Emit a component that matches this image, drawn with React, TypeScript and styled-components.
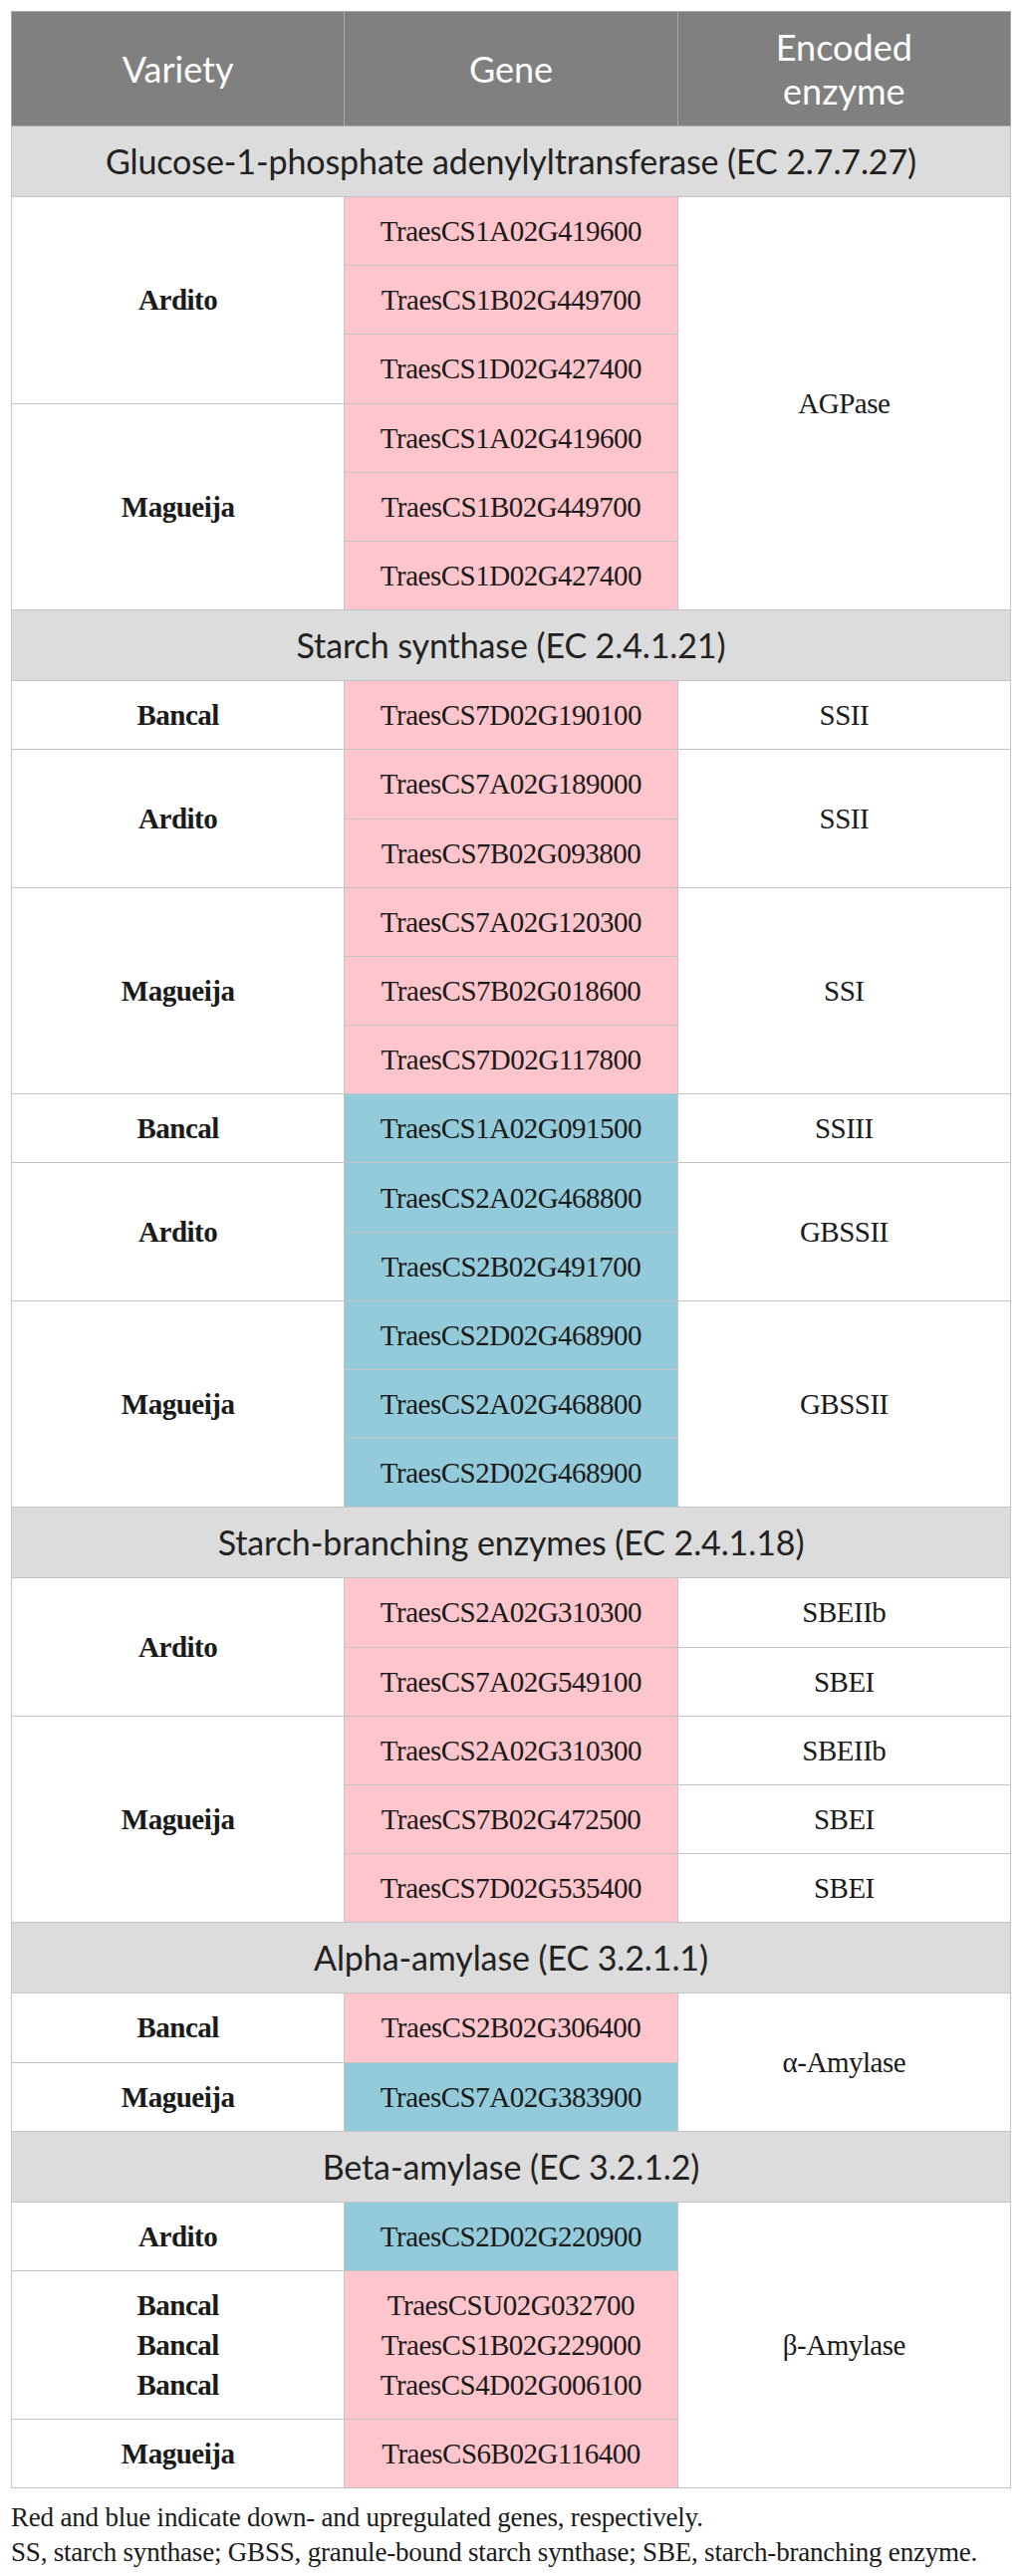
import React from "react";
import styled, { createGlobalStyle } from "styled-components";

type Tone = "down" | "up";

interface Row {
  variety?: { text: string[]; span: number };
  genes: string[];
  tone: Tone;
  enzyme?: { text: string; span: number };
}

interface Section {
  title: string;
  rows: Row[];
}

const sections: Section[] = [
  {
    title: "Glucose-1-phosphate adenylyltransferase (EC 2.7.7.27)",
    rows: [
      { variety: { text: ["Ardito"], span: 3 }, genes: ["TraesCS1A02G419600"], tone: "down", enzyme: { text: "AGPase", span: 6 } },
      { genes: ["TraesCS1B02G449700"], tone: "down" },
      { genes: ["TraesCS1D02G427400"], tone: "down" },
      { variety: { text: ["Magueija"], span: 3 }, genes: ["TraesCS1A02G419600"], tone: "down" },
      { genes: ["TraesCS1B02G449700"], tone: "down" },
      { genes: ["TraesCS1D02G427400"], tone: "down" },
    ],
  },
  {
    title: "Starch synthase (EC 2.4.1.21)",
    rows: [
      { variety: { text: ["Bancal"], span: 1 }, genes: ["TraesCS7D02G190100"], tone: "down", enzyme: { text: "SSII", span: 1 } },
      { variety: { text: ["Ardito"], span: 2 }, genes: ["TraesCS7A02G189000"], tone: "down", enzyme: { text: "SSII", span: 2 } },
      { genes: ["TraesCS7B02G093800"], tone: "down" },
      { variety: { text: ["Magueija"], span: 3 }, genes: ["TraesCS7A02G120300"], tone: "down", enzyme: { text: "SSI", span: 3 } },
      { genes: ["TraesCS7B02G018600"], tone: "down" },
      { genes: ["TraesCS7D02G117800"], tone: "down" },
      { variety: { text: ["Bancal"], span: 1 }, genes: ["TraesCS1A02G091500"], tone: "up", enzyme: { text: "SSIII", span: 1 } },
      { variety: { text: ["Ardito"], span: 2 }, genes: ["TraesCS2A02G468800"], tone: "up", enzyme: { text: "GBSSII", span: 2 } },
      { genes: ["TraesCS2B02G491700"], tone: "up" },
      { variety: { text: ["Magueija"], span: 3 }, genes: ["TraesCS2D02G468900"], tone: "up", enzyme: { text: "GBSSII", span: 3 } },
      { genes: ["TraesCS2A02G468800"], tone: "up" },
      { genes: ["TraesCS2D02G468900"], tone: "up" },
    ],
  },
  {
    title: "Starch-branching enzymes (EC 2.4.1.18)",
    rows: [
      { variety: { text: ["Ardito"], span: 2 }, genes: ["TraesCS2A02G310300"], tone: "down", enzyme: { text: "SBEIIb", span: 1 } },
      { genes: ["TraesCS7A02G549100"], tone: "down", enzyme: { text: "SBEI", span: 1 } },
      { variety: { text: ["Magueija"], span: 3 }, genes: ["TraesCS2A02G310300"], tone: "down", enzyme: { text: "SBEIIb", span: 1 } },
      { genes: ["TraesCS7B02G472500"], tone: "down", enzyme: { text: "SBEI", span: 1 } },
      { genes: ["TraesCS7D02G535400"], tone: "down", enzyme: { text: "SBEI", span: 1 } },
    ],
  },
  {
    title: "Alpha-amylase (EC 3.2.1.1)",
    rows: [
      { variety: { text: ["Bancal"], span: 1 }, genes: ["TraesCS2B02G306400"], tone: "down", enzyme: { text: "α-Amylase", span: 2 } },
      { variety: { text: ["Magueija"], span: 1 }, genes: ["TraesCS7A02G383900"], tone: "up" },
    ],
  },
  {
    title: "Beta-amylase (EC 3.2.1.2)",
    rows: [
      { variety: { text: ["Ardito"], span: 1 }, genes: ["TraesCS2D02G220900"], tone: "up", enzyme: { text: "β-Amylase", span: 3 } },
      {
        variety: { text: ["Bancal", "Bancal", "Bancal"], span: 1 },
        genes: ["TraesCSU02G032700", "TraesCS1B02G229000", "TraesCS4D02G006100"],
        tone: "down",
      },
      { variety: { text: ["Magueija"], span: 1 }, genes: ["TraesCS6B02G116400"], tone: "down" },
    ],
  },
];

const GlobalStyle = createGlobalStyle`
  body {
    margin: 0;
    background: #ffffff;
  }
`;

const Page = styled.div`
  padding: 11px 11px 20px;
`;

const Table = styled.table`
  width: 100%;
  border-collapse: collapse;
  table-layout: fixed;
  border: 1px solid #c4c4c4;
`;

const HeadCell = styled.th`
  background: #808080;
  color: #ffffff;
  font-family: Lato, "Noto Sans", sans-serif;
  font-size: 36px;
  font-weight: 400;
  line-height: 44px;
  padding: 13px 42px;
  border: 1px solid #a8a8a8;
  text-align: center;
  vertical-align: middle;
`;

const SectionCell = styled.td`
  background: #dcdcdc;
  color: #222222;
  font-family: Lato, "Noto Sans", sans-serif;
  font-size: 34px;
  letter-spacing: -0.1px;
  line-height: 44px;
  padding: 13px 10px;
  border: 1px solid #c4c4c4;
  text-align: center;
`;

const BodyCell = styled.td`
  font-family: "Liberation Serif", "Times New Roman", serif;
  font-size: 29px;
  letter-spacing: -0.5px;
  line-height: 40px;
  color: #1a1a1a;
  padding: 14.1px 10px;
  border: 1px solid #c4c4c4;
  text-align: center;
  vertical-align: middle;
  background: #ffffff;
`;

const VarietyCell = styled(BodyCell)`
  font-weight: 700;
`;

const GeneCell = styled(BodyCell)<{ $tone: Tone }>`
  background: ${(p) => (p.$tone === "up" ? "#93cbdb" : "#ffc5cd")};
`;

const Line = styled.div``;

const Notes = styled.div`
  margin-top: 12px;
  font-family: "Liberation Serif", "Times New Roman", serif;
  font-size: 27px;
  letter-spacing: -0.2px;
  line-height: 35px;
  color: #1a1a1a;
`;

const App = () => {
  return (
    <Page>
      <GlobalStyle />
      <Table>
        <thead>
          <tr>
            <HeadCell>Variety</HeadCell>
            <HeadCell>Gene</HeadCell>
            <HeadCell>Encoded enzyme</HeadCell>
          </tr>
        </thead>
        <tbody>
          {sections.map((section) => (
            <React.Fragment key={section.title}>
              <tr>
                <SectionCell colSpan={3}>{section.title}</SectionCell>
              </tr>
              {section.rows.map((row, i) => (
                <tr key={section.title + i}>
                  {row.variety && (
                    <VarietyCell rowSpan={row.variety.span}>
                      {row.variety.text.map((t, j) => (
                        <Line key={j}>{t}</Line>
                      ))}
                    </VarietyCell>
                  )}
                  <GeneCell $tone={row.tone}>
                    {row.genes.map((g) => (
                      <Line key={g}>{g}</Line>
                    ))}
                  </GeneCell>
                  {row.enzyme && <BodyCell rowSpan={row.enzyme.span}>{row.enzyme.text}</BodyCell>}
                </tr>
              ))}
            </React.Fragment>
          ))}
        </tbody>
      </Table>
      <Notes>
        <div>Red and blue indicate down- and upregulated genes, respectively.</div>
        <div>SS, starch synthase; GBSS, granule-bound starch synthase; SBE, starch-branching enzyme.</div>
      </Notes>
    </Page>
  );
};

export default App;
